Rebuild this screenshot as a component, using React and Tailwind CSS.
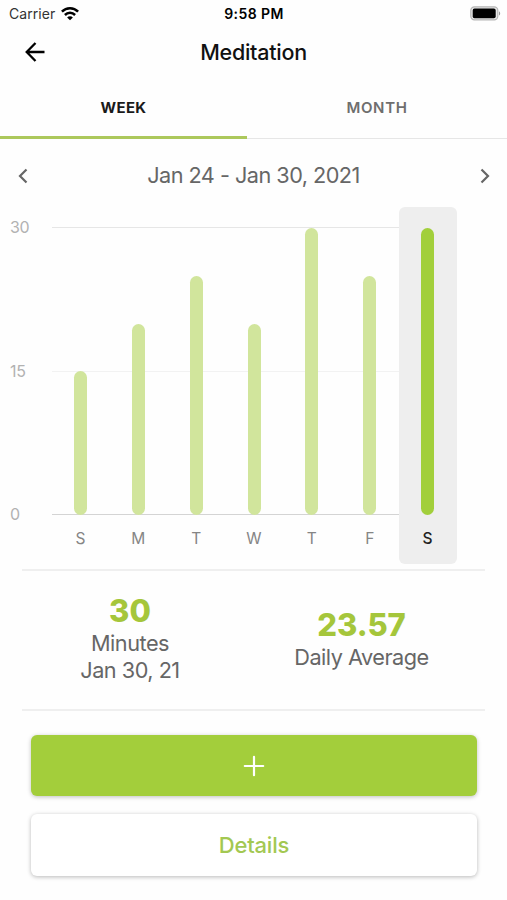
import React from 'react';

const DAYS = [
  { label: 'S', minutes: 15 },
  { label: 'M', minutes: 20 },
  { label: 'T', minutes: 25 },
  { label: 'W', minutes: 20 },
  { label: 'T', minutes: 30 },
  { label: 'F', minutes: 25 },
  { label: 'S', minutes: 30, selected: true },
];

const MAX_MINUTES = 30;
const CHART_HEIGHT = 287;

function StatusBar() {
  return (
    <div className="grid h-[27px] grid-cols-3 items-center pl-[9px] pr-[6px] text-[14px] leading-none text-black">
      <div className="flex items-center gap-[6px]">
        <span className="tracking-[0.05px] text-[#333]">Carrier</span>
        <svg width="18" height="14" viewBox="0 0 18 14" fill="none" stroke="#000" strokeWidth="2.5">
          <path d="M0.9 4.7C5.4 0.1 12.6 0.1 17.1 4.7" />
          <path d="M3.9 8C6.8 5.1 11.2 5.1 14.1 8" />
          <path d="M9 13.2L6.1 10.4C7.7 8.9 10.3 8.9 11.9 10.4Z" fill="#000" stroke="none" />
        </svg>
      </div>
      <span className="pr-[2px] text-center font-semibold whitespace-nowrap tracking-[0.4px]">9:58 PM</span>
      <svg className="justify-self-end" width="31" height="15" viewBox="0 0 31 15">
        <rect x="0.8" y="0.8" width="27" height="13" rx="3.6" fill="#e8e8e8" stroke="#b5b5b5" strokeWidth="1.2" />
        <rect x="2.7" y="2.6" width="23" height="9.6" rx="1.8" fill="#000" />
        <path d="M29 5.2C30.6 6 30.6 8.8 29 9.5Z" fill="#999" />
      </svg>
    </div>
  );
}

function Header() {
  return (
    <div className="grid h-[50px] grid-cols-[1fr_auto_1fr] items-center px-[25px]">
      <svg width="20" height="20" viewBox="0 0 20 20" fill="none" stroke="#000" strokeWidth="2.3">
        <path d="M10.5 1L1.7 10L10.5 19M1.7 10H19.5" />
      </svg>
      <h1 className="pt-[1px] text-[21.5px] font-medium leading-none tracking-[-0.25px] text-[#111]">Meditation</h1>
    </div>
  );
}

function Tabs() {
  return (
    <div className="flex h-[62px] text-[15px] font-semibold">
      <button className="w-[247px] border-b-[3px] border-[#acc85c] pt-[3px] font-bold tracking-[0.3px] text-[#1a1a1a]">
        WEEK
      </button>
      <button className="flex-1 border-b border-[#e6e6e6] pt-[1px] tracking-[0.65px] text-[#6e6e6e]">MONTH</button>
    </div>
  );
}

function DateNav() {
  return (
    <div className="flex h-[68px] items-center justify-between pl-[18px] pr-[17px] pt-[5px] text-[#666]">
      <svg width="10" height="16" viewBox="0 0 10 16" fill="none" stroke="currentColor" strokeWidth="2.2">
        <path d="M8.5 1.5L2 8L8.5 14.5" />
      </svg>
      <span className="pr-[1px] text-[21.7px] tracking-[-0.53px]">Jan 24 - Jan 30, 2021</span>
      <svg width="10" height="16" viewBox="0 0 10 16" fill="none" stroke="currentColor" strokeWidth="2.2">
        <path d="M1.5 1.5L8 8L1.5 14.5" />
      </svg>
    </div>
  );
}

function DayColumn({ label, minutes, selected }) {
  return (
    <div
      className={
        selected
          ? 'flex flex-1 flex-col items-center rounded-[6px] bg-[#eeeeee] pt-[21px] text-[#222]'
          : 'flex flex-1 flex-col items-center pt-[21px] text-[#858585]'
      }
    >
      <div className="flex h-[287px] items-end">
        <div
          className={selected ? 'w-[13px] rounded-full bg-[#a2cf3b]' : 'w-[13px] rounded-full bg-[#d1e59c]'}
          style={{ height: Math.round((minutes / MAX_MINUTES) * CHART_HEIGHT) }}
        />
      </div>
      <span className={selected ? 'mt-[12px] text-[15.5px] font-medium' : 'mt-[12px] text-[15.5px]'}>{label}</span>
    </div>
  );
}

function WeekChart() {
  return (
    <div className="grid h-[357px] grid-cols-[51.5px_405px]">
      <div className="flex h-[326px] flex-col justify-between pt-[8px] pl-[10px] text-[16px] leading-[24px] tracking-[-0.3px] text-[#b2b2b2]">
        <span>30</span>
        <span>15</span>
        <span className="mb-[7px]">0</span>
      </div>
      <div className="grid">
        <div className="col-start-1 row-start-1 mr-[10px] flex h-[308px] flex-col justify-between pt-[20px]">
          <div className="h-px bg-[#e6e6e6]" />
          <div className="h-px bg-[#f2f2f2]" />
          <div className="h-px bg-[#d4d4d4]" />
        </div>
        <div className="col-start-1 row-start-1 flex">
          {DAYS.map((day, i) => (
            <DayColumn key={i} {...day} />
          ))}
        </div>
      </div>
    </div>
  );
}

function Stats() {
  return (
    <div className="mx-[22px] mt-[5px] flex h-[142px] items-center border-y-2 border-[#efefef] pb-[1px] text-center text-[21.7px] leading-[27px] tracking-[-0.5px] text-[#666]">
      <div className="w-[216px]">
        <div className="text-[31px] font-extrabold leading-[32px] pb-[3px] tracking-normal text-[#a5c63b]">30</div>
        <div>Minutes</div>
        <div>Jan 30, 21</div>
      </div>
      <div className="flex-1">
        <div className="text-[31px] font-extrabold leading-[32px] pb-[3px] tracking-[-0.1px] text-[#a5c63b]">23.57</div>
        <div>Daily Average</div>
      </div>
    </div>
  );
}

function Actions() {
  return (
    <div className="mt-[24px] flex flex-col gap-[18px] pr-[30px] pl-[31px]">
      <button className="flex h-[61px] items-center justify-center rounded-[6px] bg-[#a3ce3b] shadow-[0_1px_4px_rgba(0,0,0,0.25)]">
        <svg width="22" height="22" viewBox="0 0 22 22" stroke="#fff" strokeWidth="2.2" strokeLinecap="round">
          <path d="M11 1.8V20.2M1.8 11H20.2" />
        </svg>
      </button>
      <button className="h-[62px] rounded-[6px] bg-white text-[22px] font-medium tracking-[-0.2px] text-[#a3c852] shadow-[0_1px_4px_rgba(0,0,0,0.28)]">
        Details
      </button>
    </div>
  );
}

export default function App() {
  return (
    <div className="h-[900px] w-[507px] overflow-hidden bg-[#fefefe] font-['Inter',sans-serif]">
      <StatusBar />
      <Header />
      <Tabs />
      <DateNav />
      <WeekChart />
      <Stats />
      <Actions />
    </div>
  );
}
